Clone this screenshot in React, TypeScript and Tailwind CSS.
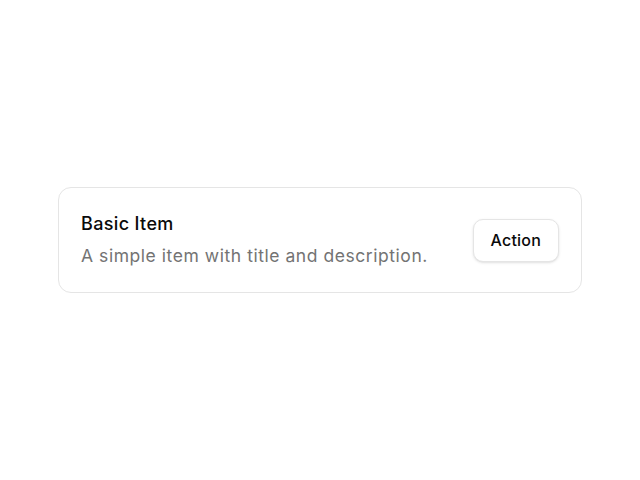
export default function App() {
  return (
    <div
      className="w-[640px] h-[480px] bg-white flex items-center justify-center"
      style={{ fontFamily: 'Inter, "Noto Sans", sans-serif' }}
    >
      <div className="w-[524px] h-[106px] rounded-[13px] border border-[#e5e5e5] pl-[22px] pr-[22px] flex items-center justify-between">
        <div className="flex flex-col gap-[8px]">
          <div className="text-[18px] leading-[24px] font-medium tracking-[0.35px] text-[#0a0a0a]">Basic Item</div>
          <div className="text-[17.5px] leading-[24px] tracking-[0.55px] text-[#737373]">A simple item with title and description.</div>
        </div>
        <button className="h-[43px] px-[17px] rounded-[10px] border border-[#e5e5e5] bg-white shadow-sm text-[16px] font-medium tracking-[0.2px] text-[#0a0a0a]">
          Action
        </button>
      </div>
    </div>
  );
}
